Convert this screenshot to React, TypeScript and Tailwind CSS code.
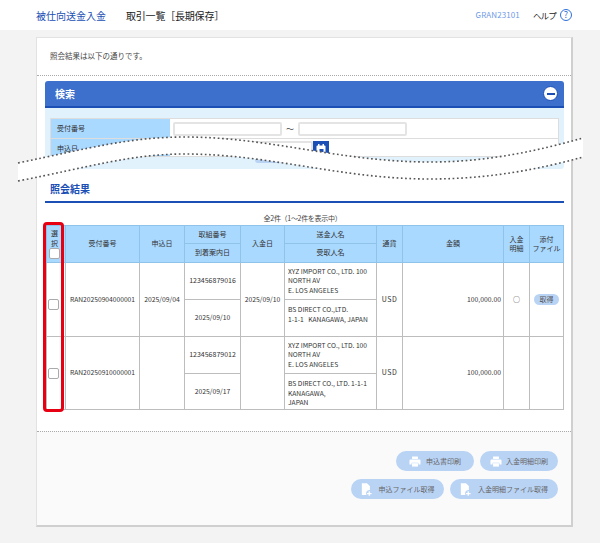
import { Fragment } from 'react';

const font = { fontFamily: '"Noto Sans CJK JP", "Liberation Sans", sans-serif' };

const thCls = 'bg-[#aad9ff] border border-[#8fc3ea] font-normal text-[#333] text-center p-0';
const tdCls = 'border border-[#bdbdbd] bg-white text-[#333] p-0';

const PrinterIcon = () => (
  <svg width="12" height="11" viewBox="0 0 14 13" fill="#fff">
    <rect x="3.5" y="0.5" width="7" height="3" rx="0.5" />
    <path d="M1.5 4h11a1 1 0 0 1 1 1v5h-2.5V8H3v2H.5V5a1 1 0 0 1 1-1z" />
    <rect x="3.5" y="8.5" width="7" height="4" />
  </svg>
);

const FileIcon = () => (
  <svg width="11" height="13" viewBox="0 0 13 15" fill="#fff">
    <path d="M1 0h6l3.5 3.5V8a4 4 0 0 0-4 6H1z" />
    <path d="M9 9.5v2H7v1.5h2V15h1.5v-2h2v-1.5h-2v-2z" />
  </svg>
);

const CalendarIcon = () => (
  <svg width="10" height="11" viewBox="0 0 10 11">
    <rect x="0.5" y="1.5" width="9" height="9" rx="1" fill="#fff" />
    <rect x="2" y="0" width="1.5" height="3" fill="#fff" />
    <rect x="6.5" y="0" width="1.5" height="3" fill="#fff" />
    <rect x="3.5" y="5" width="4" height="4" fill="#1b4fb5" />
  </svg>
);

const Btn = ({ w, icon, label, gap }: { w: string; icon: 'print' | 'file'; label: string; gap: string }) => (
  <div className={`${w} ${gap} h-[20px] rounded-full bg-[#b9d3f5] flex items-center justify-center text-[7px] text-[#666]`}>
    {icon === 'print' ? <PrinterIcon /> : <FileIcon />}
    <span>{label}</span>
  </div>
);

const Check = ({ cls }: { cls: string }) => (
  <div className={`w-[11px] h-[11px] bg-white border border-[#aaa] rounded-[2px] ${cls}`} />
);

const rows = [
  {
    no: 'RAN20250904000001',
    applied: '2025/09/04',
    tori: '123456879016',
    arrival: '2025/09/10',
    paid: '2025/09/10',
    sender: ['XYZ IMPORT CO., LTD. 100', 'NORTH AV', 'E. LOS ANGELES'],
    receiver: ['BS DIRECT CO.,LTD.', '1-1-1\u00a0\u00a0\u00a0KANAGAWA, JAPAN'],
    detail: true,
  },
  {
    no: 'RAN20250910000001',
    applied: '',
    tori: '123456879012',
    arrival: '2025/09/17',
    paid: '',
    sender: ['XYZ IMPORT CO., LTD. 100', 'NORTH AV', 'E. LOS ANGELES'],
    receiver: ['BS DIRECT CO., LTD. 1-1-1', 'KANAGAWA,', 'JAPAN'],
    detail: false,
  },
];

export default function App() {
  return (
    <div style={font} className="relative w-[600px] h-[543px] overflow-hidden bg-[#f3f3f3]">
      <header className="h-[30px] bg-white flex items-center pl-[36px] pr-[28px]">
        <h1 className="text-[10px] text-[#1b4fb5] w-[90px]">被仕向送金入金</h1>
        <h2 className="text-[10px] text-[#222] tracking-[-0.2px]">取引一覧［長期保存］</h2>
        <span className="ml-auto text-[8px] text-[#6f9be8] tracking-[0.1px]">GRAN23101</span>
        <span className="ml-[13px] text-[8.5px] text-[#222] tracking-[-0.8px]">ヘルプ</span>
        <span className="ml-[4px] w-[12px] h-[12px] rounded-full border border-[#2f6fdc] text-[#2f6fdc] text-[9px] leading-[10px] text-center">?</span>
      </header>

      <main className="ml-[36px] mt-[7px] w-[537px] h-[490px] bg-white border-t border-l border-[#e2e2e2] border-r-2 border-b-2 border-r-[#cfcfcf] border-b-[#cfcfcf]">
        <p className="h-[38px] pl-[13px] pt-[12px] text-[7.5px] leading-[12px] text-[#444] border-b border-dotted border-[#aaa]">
          照会結果は以下の通りです。
        </p>

        <section className="mx-[8px] mt-[5px] w-[519px]">
          <div className="h-[27px] bg-[#3d6fcc] rounded-t-[3px] border-b-2 border-[#1b4fb5] flex items-center justify-between pl-[10px] pr-[6px]">
            <span className="text-[10px] font-bold text-white">検索</span>
            <span className="w-[15px] h-[15px] rounded-full bg-white border border-[#1b4fb5] flex items-center justify-center">
              <span className="w-[8px] h-[2px] bg-[#1b4fb5]" />
            </span>
          </div>
          <div className="h-[61px] bg-[#e1f2fd] rounded-b-[3px] px-[5px] pt-[10px]">
            <div className="flex h-[21px] bg-white border border-[#ddd]">
              <div className="w-[119px] bg-[#aad9ff] text-[7px] leading-[19px] pl-[6px] text-[#333]">受付番号</div>
              <div className="flex items-center pl-[3px]">
                <div className="w-[109px] h-[14px] border-2 border-[#e4e4e4] rounded-[2px]" />
                <span className="w-[16px] text-center text-[8px] text-[#444]">～</span>
                <div className="w-[109px] h-[14px] border-2 border-[#e4e4e4] rounded-[2px]" />
              </div>
            </div>
            <div className="flex h-[18px] bg-white border border-t-0 border-[#ddd]">
              <div className="w-[119px] bg-[#aad9ff] text-[7px] leading-[19px] pl-[6px] text-[#333]">申込日</div>
              <div className="flex items-start pl-[43px] pt-[2px]">
                <div className="w-[100px] h-[14px] border-2 border-[#e4e4e4] rounded-[2px]" />
                <div className="w-[16px] h-[16px] bg-[#1b4fb5] flex items-center justify-center">
                  <CalendarIcon />
                </div>
              </div>
            </div>
            <div className="ml-[205px] w-[30px] h-[6px] rounded-b-[3px] bg-[#b9d3f5]" />
          </div>
        </section>

        <h3 className="mx-[13px] mt-[13px] text-[10px] font-bold text-[#1b4fb5] leading-[14px]">照会結果</h3>
        <div className="mx-[8px] mt-[5px] w-[519px] h-[2px] bg-[#1b4fb5]" />
        <p className="mt-[10px] pr-[3px] text-center text-[7px] leading-[10px] text-[#444] tracking-[-0.3px]">全2件（1～2件を表示中）</p>

        <div className="relative mx-[9px] mt-[2px] w-[517px]">
          <table className="w-[517px] table-fixed border-collapse text-[7px] leading-[9.5px]">
            <colgroup>
              <col className="w-[19px]" />
              <col className="w-[74px]" />
              <col className="w-[45px]" />
              <col className="w-[56px]" />
              <col className="w-[44px]" />
              <col className="w-[92px]" />
              <col className="w-[26px]" />
              <col className="w-[101px]" />
              <col className="w-[26px]" />
              <col className="w-[34px]" />
            </colgroup>
            <thead>
              <tr className="h-[18px]">
                <th rowSpan={2} className={thCls + ' align-top pt-[3px] pr-[3px]'}>
                  <div>選</div>
                  <div>択</div>
                  <Check cls="ml-[2px]" />
                </th>
                <th rowSpan={2} className={thCls}>受付番号</th>
                <th rowSpan={2} className={thCls}>申込日</th>
                <th className={thCls}>取組番号</th>
                <th rowSpan={2} className={thCls}>入金日</th>
                <th className={thCls}>送金人名</th>
                <th rowSpan={2} className={thCls}>通貨</th>
                <th rowSpan={2} className={thCls}>金額</th>
                <th rowSpan={2} className={thCls}>入金<br />明細</th>
                <th rowSpan={2} className={thCls}>添付<br />ファイル</th>
              </tr>
              <tr className="h-[19px]">
                <th className={thCls}>到着案内日</th>
                <th className={thCls}>受取人名</th>
              </tr>
            </thead>
            <tbody>
              {rows.map((r, i) => (
                <Fragment key={r.no}>
                  <tr className="h-[37px]">
                    <td rowSpan={2} className={tdCls}>
                      <Check cls={i === 0 ? 'ml-[1px] mt-[10px]' : 'ml-[1px]'} />
                    </td>
                    <td rowSpan={2} className={tdCls + ' text-center whitespace-nowrap text-[6.7px]'}>{r.no}</td>
                    <td rowSpan={2} className={tdCls + ' text-center whitespace-nowrap text-[6.8px]'}>{r.applied}</td>
                    <td className={tdCls + ' text-center'}>{r.tori}</td>
                    <td rowSpan={2} className={tdCls + ' text-center whitespace-nowrap text-[6.8px]'}>{r.paid}</td>
                    <td className={tdCls + ' pl-[3px] whitespace-nowrap text-[6.7px]'}>
                      {r.sender.map((s) => <div key={s}>{s}</div>)}
                    </td>
                    <td rowSpan={2} className={tdCls + ' text-center tracking-[0.5px]'}>USD</td>
                    <td rowSpan={2} className={tdCls + ' text-right pr-[2px] text-[6.8px]'}>100,000.00</td>
                    <td rowSpan={2} className={tdCls + ' text-center'}>{r.detail ? '○' : ''}</td>
                    <td rowSpan={2} className={tdCls}>
                      {r.detail && (
                        <div className="w-[25px] h-[11px] mx-auto rounded-full bg-[#b9d3f5] text-center text-[#555] leading-[11px]">取得</div>
                      )}
                    </td>
                  </tr>
                  <tr className={i === 0 ? 'h-[37px]' : 'h-[36px]'}>
                    <td className={tdCls + ' text-center text-[6.8px]'}>{r.arrival}</td>
                    <td className={tdCls + ' pl-[3px] whitespace-nowrap align-top pt-[5px] text-[6.7px]'}>
                      {r.receiver.map((s) => <div key={s}>{s}</div>)}
                    </td>
                  </tr>
                </Fragment>
              ))}
            </tbody>
          </table>
          <div className="absolute left-[-3px] top-[-3px] w-[21px] h-[190px] border-[3px] border-[#e60012] rounded-[4px]" />
        </div>

        <div className="mt-[21px] h-[94px] bg-[#fafafa] border-t border-dotted border-[#aaa] pt-[19px] pr-[13px] flex flex-col items-end gap-[8px]">
          <div className="flex gap-[6px]">
            <Btn w="w-[78px]" gap="gap-[5px]" icon="print" label="申込書印刷" />
            <Btn w="w-[78px]" gap="gap-[4px]" icon="print" label="入金明細印刷" />
          </div>
          <div className="flex gap-[6px]">
            <Btn w="w-[93px]" gap="gap-[7px]" icon="file" label="申込ファイル取得" />
            <Btn w="w-[108px]" gap="gap-[7px]" icon="file" label="入金明細ファイル取得" />
          </div>
        </div>
      </main>

      <svg className="absolute left-0 top-0 pointer-events-none" width="600" height="200" viewBox="0 0 600 200">
        <path d="M18 163 C 90 148, 130 137, 185 137 C 270 137, 340 162, 430 162 C 490 162, 540 150, 583 138 L 583 157 C 540 169, 490 179, 430 179 C 340 179, 270 154, 185 154 C 130 154, 90 167, 18 181 Z" fill="#fff" />
        <path d="M18 163 C 90 148, 130 137, 185 137 C 270 137, 340 162, 430 162 C 490 162, 540 150, 583 138" fill="none" stroke="#555" strokeWidth="1.6" strokeDasharray="1.7 2.6" />
        <path d="M18 181 C 90 167, 130 154, 185 154 C 270 154, 340 179, 430 179 C 490 179, 540 169, 583 157" fill="none" stroke="#555" strokeWidth="1.6" strokeDasharray="1.7 2.6" />
      </svg>
    </div>
  );
}
